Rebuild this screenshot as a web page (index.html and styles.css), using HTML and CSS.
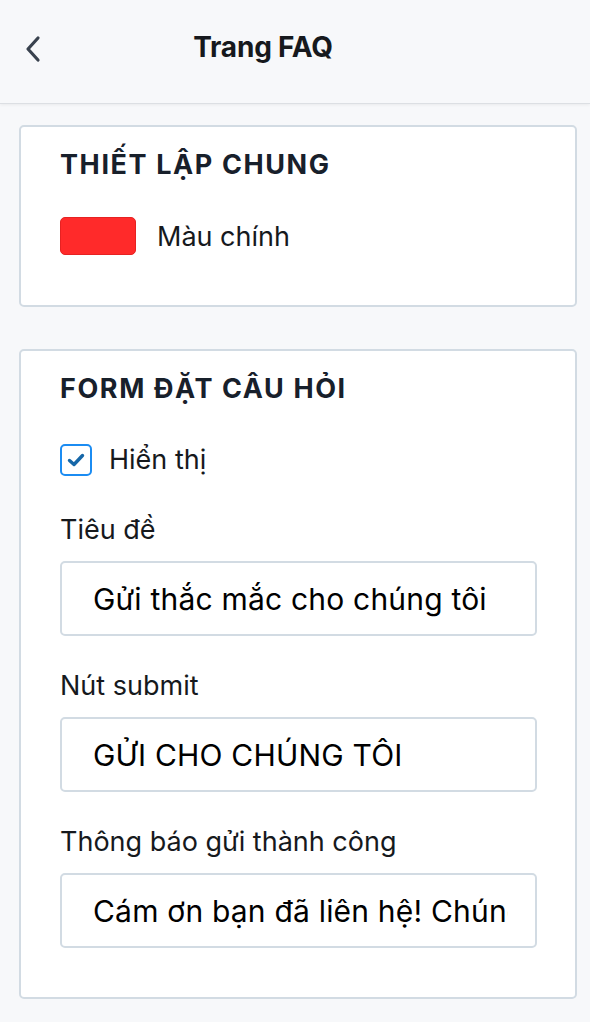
FILE: index.html
```html
<!DOCTYPE html>
<html lang="vi">
<head>
<meta charset="utf-8">
<title>Trang FAQ</title>
<link rel="stylesheet" href="styles.css">
</head>
<body>
<header class="topbar">
  <button class="back" aria-label="Quay lại">
    <svg width="16" height="28" viewBox="0 0 16 28"><path d="M13 3 L3 14 L13 25" fill="none" stroke="#39424e" stroke-width="3.2" stroke-linecap="round" stroke-linejoin="round"/></svg>
  </button>
  <h1 class="title">Trang FAQ</h1>
</header>
<main class="content">
  <section class="card card-general">
    <h2 class="card-title">THIẾT LẬP CHUNG</h2>
    <div class="color-row">
      <span class="swatch"></span>
      <span class="color-label">Màu chính</span>
    </div>
  </section>
  <section class="card card-form">
    <h2 class="card-title">FORM ĐẶT CÂU HỎI</h2>
    <label class="check-row">
      <span class="checkbox">
        <svg width="22" height="22" viewBox="0 0 22 22"><path d="M4.5 11.5 L9 15.5 L17.5 6.5" fill="none" stroke="#1667a8" stroke-width="3.4" stroke-linecap="round" stroke-linejoin="round"/></svg>
      </span>
      <span class="check-label">Hiển thị</span>
    </label>
    <div class="field field-first">
      <div class="field-label">Tiêu đề</div>
      <div class="input"><span class="input-text">Gửi thắc mắc cho chúng tôi</span></div>
    </div>
    <div class="field">
      <div class="field-label">Nút submit</div>
      <div class="input"><span class="input-text">GỬI CHO CHÚNG TÔI</span></div>
    </div>
    <div class="field">
      <div class="field-label">Thông báo gửi thành công</div>
      <div class="input"><span class="input-text">Cám ơn bạn đã liên hệ! Chúng tôi sẽ phản hồi sớm nhất có thể.</span></div>
    </div>
  </section>
</main>
</body>
</html>
```
FILE: styles.css
```css
* { box-sizing: border-box; }
html, body { margin: 0; padding: 0; }
body {
  background: #f7f8fa;
  font-family: Inter, "Noto Sans", "DejaVu Sans", sans-serif;
  color: #111418;
  width: 590px;
  height: 1022px;
  overflow: hidden;
}
.topbar {
  height: 104px;
  background: #f7f8fa;
  border-bottom: 1px solid #dcdfe3;
  box-shadow: 0 1px 3px rgba(0,0,0,0.06);
  display: flex;
  align-items: center;
  justify-content: center;
  padding-right: 64px;
  position: relative;
}
.back {
  position: absolute;
  left: 25px;
  top: 35px;
  background: none;
  border: 0;
  padding: 0;
  width: 16px;
  height: 28px;
}
.back svg { display: block; }
.title {
  margin: 0;
  font-size: 28px;
  font-weight: 700;
  color: #16191d;
  letter-spacing: -0.2px;
  padding-bottom: 10px;
}
.content {
  padding: 21px 13px 0 19px;
  display: flex;
  flex-direction: column;
  gap: 42px;
}
.card {
  background: #fff;
  border: 2px solid #d2dbe3;
  border-radius: 5px;
  padding: 21px 39px 0 39px;
}
.card-general { height: 182px; }
.card-form { height: 650px; }
.card-title {
  margin: 0;
  font-size: 27px;
  line-height: 33px;
  font-weight: 700;
  letter-spacing: 1.6px;
  color: #18202b;
}
.color-row {
  margin-top: 36px;
  display: flex;
  align-items: center;
  gap: 21px;
}
.swatch {
  width: 76px;
  height: 38px;
  background: #ff2a2a;
  border: 1px solid #e62222;
  border-radius: 5px;
}
.color-label { font-size: 27px; line-height: 33px; color: #16191d; }
.check-row {
  margin-top: 39px;
  height: 32px;
  display: flex;
  align-items: center;
  gap: 17px;
}
.checkbox {
  width: 32px;
  height: 32px;
  border: 2px solid #1b8cf2;
  border-radius: 5px;
  display: flex;
  align-items: center;
  justify-content: center;
}
.check-label { font-size: 27px; line-height: 32px; color: #16191d; }
.field { margin-top: 33px; }
.field-first { margin-top: 37px; }
.field-label {
  font-size: 27px;
  line-height: 33px;
  color: #16191d;
}
.input {
  margin-top: 15px;
  height: 75px;
  width: 477px;
  border: 2px solid #d2dbe3;
  border-radius: 5px;
  background: #fff;
  padding: 0 27px 0 31px;
  display: flex;
  align-items: center;
  font-size: 30px;
  letter-spacing: 0.2px;
  color: #000;
}
.input-text {
  flex: 1;
  min-width: 0;
  white-space: nowrap;
  overflow: hidden;
  line-height: 40px;
}
```
